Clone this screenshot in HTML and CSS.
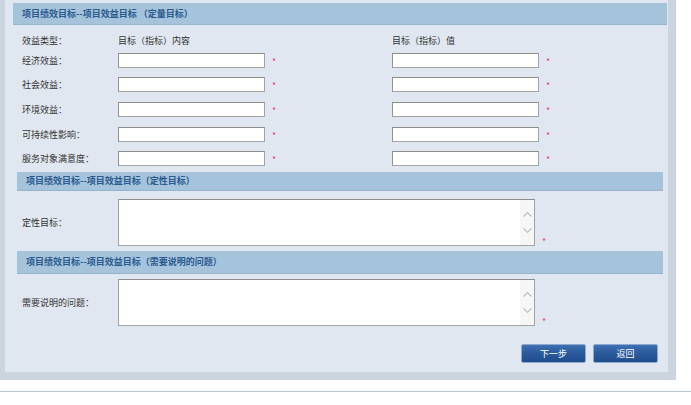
FILE: index.html
```html
<!DOCTYPE html>
<html lang="zh-CN">
<head>
    <meta charset="UTF-8">
    <meta name="viewport" content="width=device-width, initial-scale=1.0">
    <title>项目绩效目标</title>
    <link rel="stylesheet" href="styles.css">
</head>
<body>
    <div class="outer">
        <div class="panel">
            <div class="sec-head sec-head-main">项目绩效目标--项目效益目标 （定量目标）</div>

            <div class="col-head">
                <div class="label">效益类型：</div>
                <div class="col-title">目标（指标）内容</div>
                <div class="col-title">目标（指标）值</div>
            </div>

            <div class="row">
                <div class="label">经济效益：</div>
                <input type="text" class="field">
                <span class="star">*</span>
                <input type="text" class="field">
                <span class="star">*</span>
            </div>
            <div class="row">
                <div class="label">社会效益：</div>
                <input type="text" class="field">
                <span class="star">*</span>
                <input type="text" class="field">
                <span class="star">*</span>
            </div>
            <div class="row">
                <div class="label">环境效益：</div>
                <input type="text" class="field">
                <span class="star">*</span>
                <input type="text" class="field">
                <span class="star">*</span>
            </div>
            <div class="row">
                <div class="label">可持续性影响：</div>
                <input type="text" class="field">
                <span class="star">*</span>
                <input type="text" class="field">
                <span class="star">*</span>
            </div>
            <div class="row">
                <div class="label">服务对象满意度：</div>
                <input type="text" class="field">
                <span class="star">*</span>
                <input type="text" class="field">
                <span class="star">*</span>
            </div>

            <div class="nested">
                <div class="sec-head sec-head-2">项目绩效目标--项目效益目标（定性目标）</div>
                <div class="ta-row ta-row-1">
                    <div class="ta-label">定性目标：</div>
                    <div class="ta-box">
                        <textarea></textarea>
                        <div class="ta-scroll">
                            <svg width="9" height="5" viewBox="0 0 9 5"><path d="M0.5 4.5 L4.5 0.7 L8.5 4.5" fill="none" stroke="#b5bcc4" stroke-width="1.1"/></svg>
                            <svg width="9" height="5" viewBox="0 0 9 5"><path d="M0.5 0.5 L4.5 4.3 L8.5 0.5" fill="none" stroke="#b5bcc4" stroke-width="1.1"/></svg>
                        </div>
                    </div>
                    <span class="star ta-star">*</span>
                </div>

                <div class="sec-head sec-head-3">项目绩效目标--项目效益目标（需要说明的问题）</div>
                <div class="ta-row ta-row-2">
                    <div class="ta-label">需要说明的问题：</div>
                    <div class="ta-box">
                        <textarea></textarea>
                        <div class="ta-scroll">
                            <svg width="9" height="5" viewBox="0 0 9 5"><path d="M0.5 4.5 L4.5 0.7 L8.5 4.5" fill="none" stroke="#b5bcc4" stroke-width="1.1"/></svg>
                            <svg width="9" height="5" viewBox="0 0 9 5"><path d="M0.5 0.5 L4.5 4.3 L8.5 0.5" fill="none" stroke="#b5bcc4" stroke-width="1.1"/></svg>
                        </div>
                    </div>
                    <span class="star ta-star">*</span>
                </div>

                <div class="actions">
                    <button type="button" class="btn">下一步</button>
                    <button type="button" class="btn">返回</button>
                </div>
            </div>
        </div>
    </div>
    <div class="foot-line"></div>
</body>
</html>
```

FILE: styles.css
```css
* {
    box-sizing: border-box;
    margin: 0;
    padding: 0;
}

body {
    font-family: "Noto Sans CJK SC", "Liberation Sans", sans-serif;
    font-size: 9px;
    color: #333;
    background-color: #fff;
}

.outer {
    width: 676px;
    background-color: #ccd5df;
    padding: 0 8px 8px 5px;
}

.panel {
    background-color: #e1e7f0;
    padding: 3px 1px 9.3px 8px;
}

.sec-head {
    background-color: #a5c3db;
    border-bottom: 1px solid #95b3cb;
    color: #2b5a8e;
    font-weight: bold;
    padding-left: 9px;
    display: flex;
    align-items: center;
}

.sec-head-main {
    height: 22px;
}

.sec-head-2 {
    height: 19px;
}

.sec-head-3 {
    height: 23px;
}

.col-head {
    height: 23.7px;
    display: flex;
    align-items: flex-end;
    padding-bottom: 3px;
    line-height: 11px;
}

.label {
    width: 105px;
    padding-left: 9px;
    flex-shrink: 0;
}

.col-title {
    width: 274px;
}

.row {
    height: 24.65px;
    display: flex;
    align-items: flex-start;
    padding-top: 4px;
    line-height: 15px;
}

.field {
    width: 147px;
    height: 15px;
    border: 1px solid #a3a3a3;
    border-top-color: #8c8c8c;
    border-left-color: #939393;
    background-color: #fff;
    font-size: 9px;
}

.star {
    color: #e5487a;
    font-size: 9px;
    width: 127px;
    padding: 1px 0 0 7px;
}

.nested {
    margin: 0 4px;
}

.ta-row {
    display: flex;
    align-items: center;
}

.ta-row-1 {
    padding: 8.6px 0 4.5px;
}

.ta-row-2 {
    padding: 5.2px 0 0;
}

.ta-label {
    width: 101px;
    padding-left: 5px;
    flex-shrink: 0;
}

.ta-box {
    width: 417px;
    height: 47px;
    display: flex;
    border: 1px solid #a3a3a3;
    border-top-color: #8c8c8c;
    background-color: #fff;
}

.ta-box textarea {
    flex: 1;
    border: none;
    resize: none;
    outline: none;
    overflow: hidden;
    font-size: 9px;
}

.ta-scroll {
    width: 14px;
    background-color: #f6f6f6;
    display: flex;
    flex-direction: column;
    align-items: center;
    justify-content: center;
    gap: 11px;
}

.ta-star {
    width: auto;
    align-self: flex-end;
    padding-left: 7px;
    line-height: 9px;
}

.actions {
    display: flex;
    justify-content: flex-end;
    gap: 7px;
    padding: 18px 5px 0 0;
}

.btn {
    width: 65px;
    height: 18.4px;
    border: 1px solid #8eaad0;
    border-radius: 2px;
    background: linear-gradient(#3e70b2, #2a5a9c 50%, #1f4c8c);
    color: #fff;
    font-family: inherit;
    font-size: 9px;
    cursor: pointer;
}

.foot-line {
    margin-top: 11px;
    height: 1px;
    background-color: #b5c5d3;
}
```
